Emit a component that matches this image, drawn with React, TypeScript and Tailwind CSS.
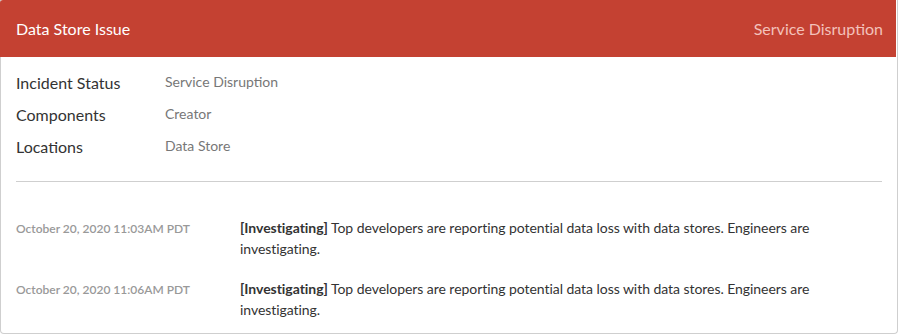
import React from 'react';

const FIELDS = [
  { label: 'Incident Status', value: 'Service Disruption' },
  { label: 'Components', value: 'Creator' },
  { label: 'Locations', value: 'Data Store' },
];

const UPDATES = [
  { time: 'October 20, 2020 11:03AM PDT', status: 'Investigating', text: 'Top developers are reporting potential data loss with data stores. Engineers are investigating.' },
  { time: 'October 20, 2020 11:06AM PDT', status: 'Investigating', text: 'Top developers are reporting potential data loss with data stores. Engineers are investigating.' },
];

const App: React.FC = () => {
  return (
    <div className="w-[898px] h-[334px] bg-white font-['Lato',sans-serif]">
      <div className="h-[334px] border-x border-b border-[#cfcfcf] rounded-b-[4px] flex flex-col">
        <div className="h-[57px] -ml-px mr-px bg-[#c44132] flex items-center justify-between pl-[16px] pr-[13px] rounded-tl-[3px]">
          <h3 className="text-white text-[16px]">Data Store Issue</h3>
          <span className="text-[#f3c2bb] text-[16px]">Service Disruption</span>
        </div>

        <div className="px-[15px] pt-[15px]">
          {FIELDS.map(f => (
            <div key={f.label} className="flex h-[32px] items-start">
              <div className="w-[149px] text-[16px] text-[#333] leading-[22px]">{f.label}</div>
              <div className="text-[14px] text-[#777] leading-[20px]">{f.value}</div>
            </div>
          ))}
          <div className="mt-[13px] border-t border-[#cfcfcf]"></div>
        </div>

        <div className="px-[15px] pt-[35px] space-y-[19px]">
          {UPDATES.map((u, i) => (
            <div key={i} className="flex">
              <div className="w-[224px] shrink-0 text-[12px] font-semibold text-[#999] leading-[21px] pt-[1px]">{u.time}</div>
              <p className="w-[585px] text-[14px] text-[#333] leading-[21px] tracking-[-0.05px]">
                <span className="font-bold">[{u.status}]</span> {u.text}
              </p>
            </div>
          ))}
        </div>
      </div>
    </div>
  );
};

export default App;
